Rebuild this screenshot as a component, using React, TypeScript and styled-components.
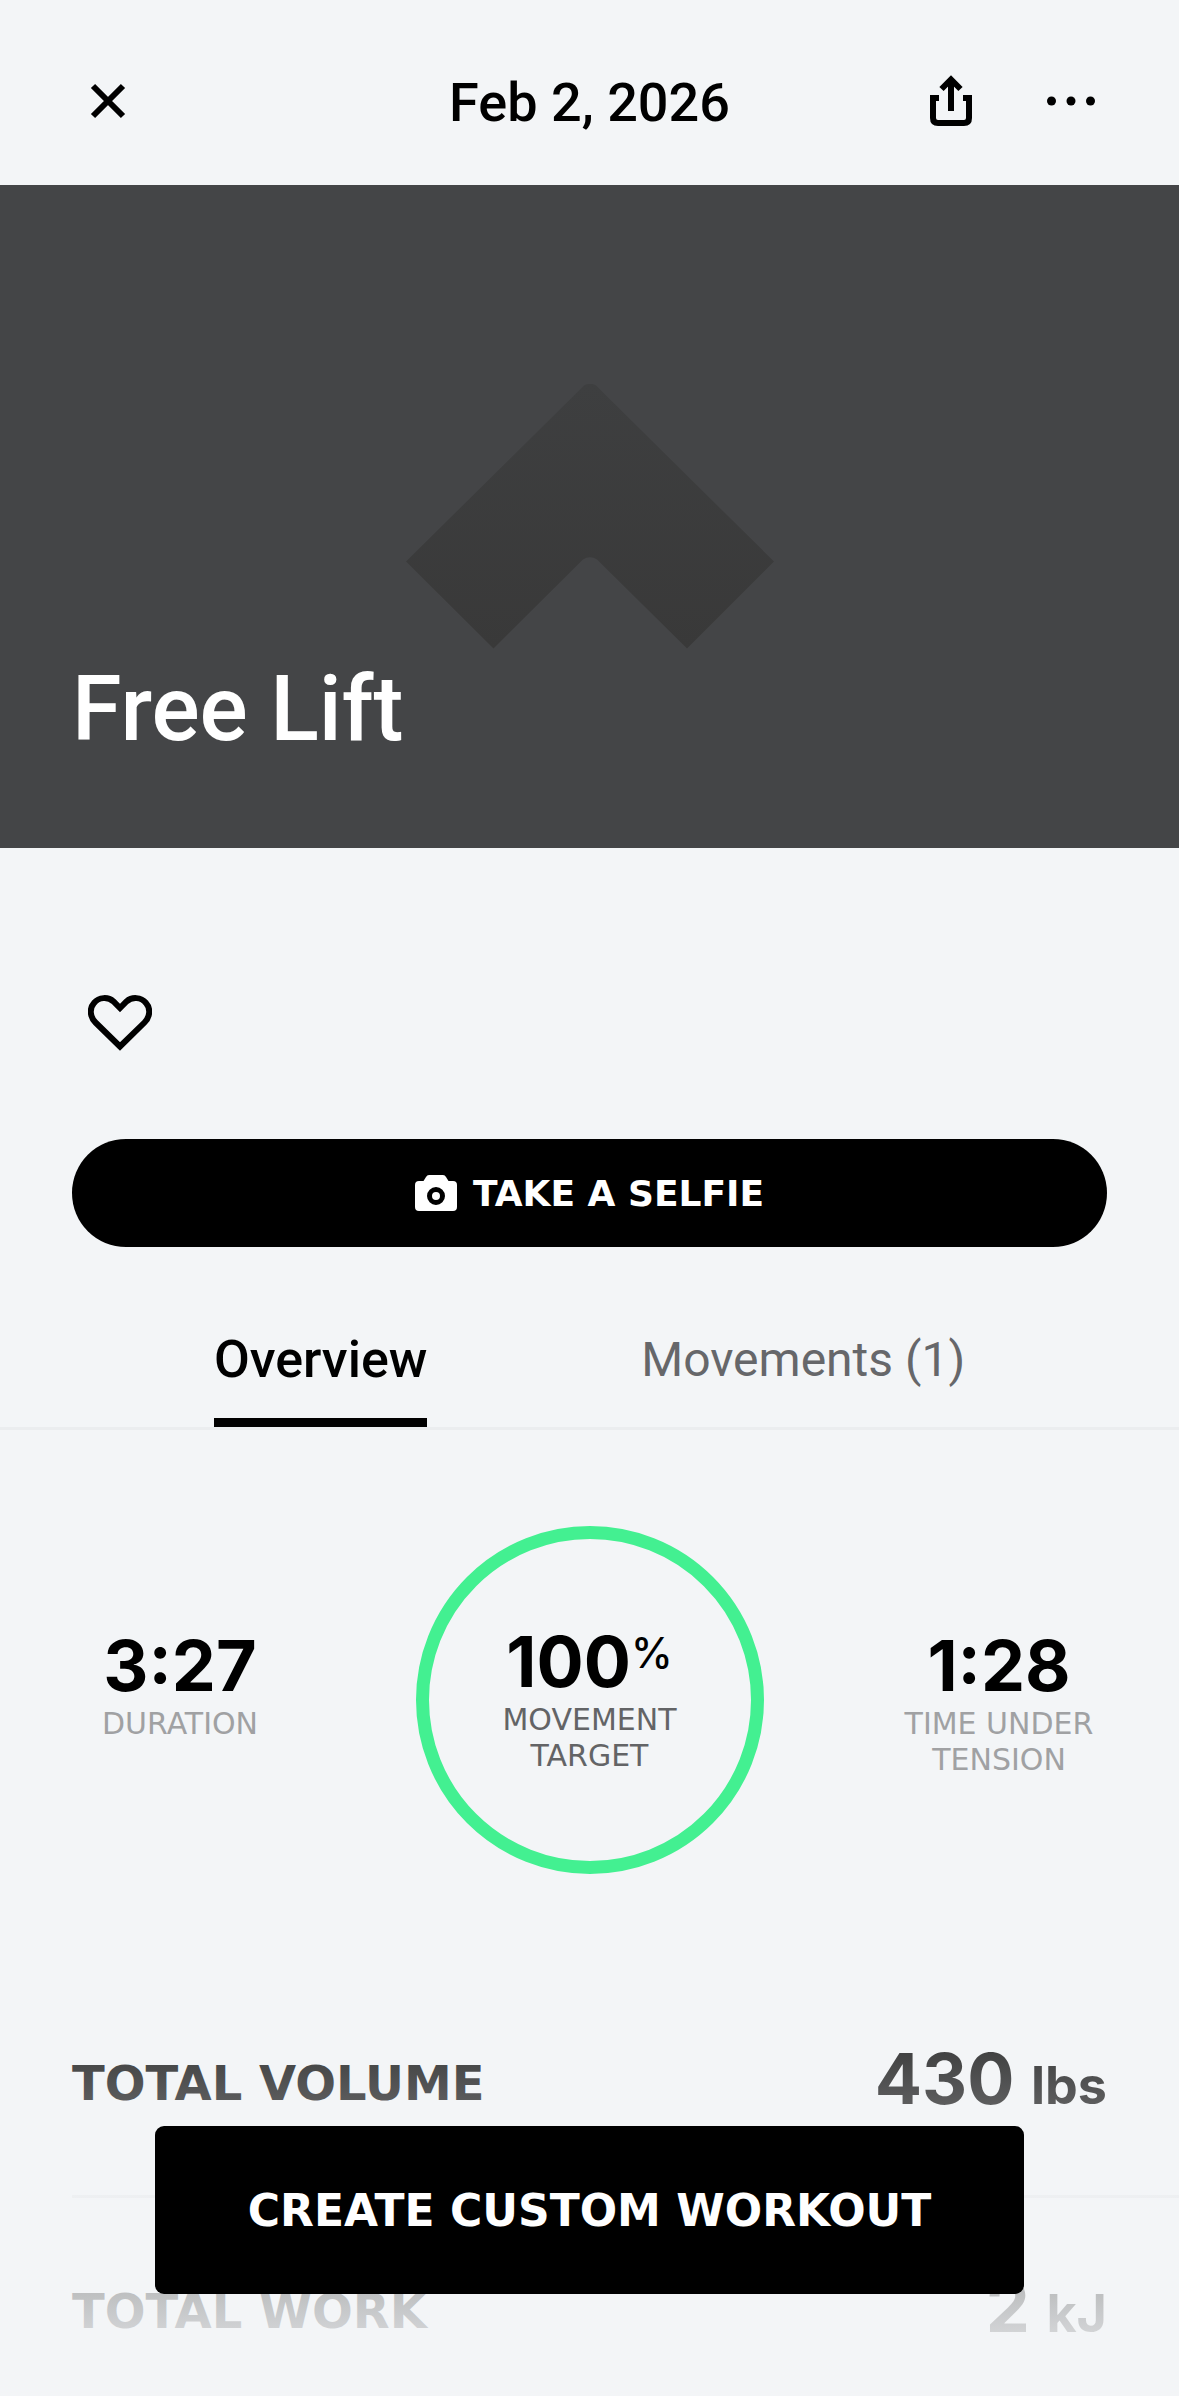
import React, { useState } from "react";
import styled, { createGlobalStyle } from "styled-components";

const sans = `Roboto, "Liberation Sans", sans-serif`;
const numeral = `Inter, "Liberation Sans", sans-serif`;
const wide = `"DejaVu Sans", "Liberation Sans", sans-serif`;
const surface = "#f3f5f7";
const line = "#ebedef";

const GlobalStyle = createGlobalStyle`
  *, *::before, *::after { box-sizing: border-box; }
  body { margin: 0; background: ${surface}; color: #000; font-family: ${sans}; }
  button { margin: 0; padding: 0; border: 0; background: none; color: inherit; font: inherit; cursor: pointer; }
  h1, h2, p, dl, dt, dd { margin: 0; }
  svg { display: block; }
`;

const Shell = styled.div`
  position: relative;
  display: flex;
  flex-direction: column;
  height: 100vh;
  overflow: hidden;
`;

const Header = styled.header`
  display: grid;
  grid-template-columns: 1fr auto 1fr;
  align-items: center;
  flex: none;
  height: 185px;
  padding: 16px 72px 0;
`;

const HeaderTitle = styled.h2`
  padding-top: 4px;
  font-size: 54px;
  line-height: 72px;
  font-weight: 500;
`;

const Actions = styled.div`
  display: flex;
  justify-content: flex-end;
  gap: 48px;
`;

const IconButton = styled.button<{ $size?: number }>`
  display: flex;
  align-items: center;
  justify-content: center;
  width: ${({ $size = 72 }) => $size}px;
  height: ${({ $size = 72 }) => $size}px;
`;

const Scroller = styled.main`
  flex: 1;
  min-height: 0;
  overflow-y: auto;
  scrollbar-width: none;
  padding-bottom: 240px;
`;

const Hero = styled.section`
  position: relative;
  display: flex;
  align-items: flex-end;
  height: 663px;
  padding: 0 72px 84px;
  background: #444547;
`;

const HeroMark = styled.svg`
  position: absolute;
  top: 199px;
  left: 50%;
  margin-left: -185px;
`;

const HeroTitle = styled.h1`
  position: relative;
  color: #fff;
  font-size: 90px;
  line-height: 108px;
  font-weight: 500;
`;

const Intro = styled.section`
  display: flex;
  flex-direction: column;
  align-items: flex-start;
  gap: 68px;
  padding: 127px 72px 72px;
`;

const SelfieButton = styled.button`
  display: flex;
  align-items: center;
  justify-content: center;
  gap: 16px;
  width: 100%;
  height: 108px;
  border-radius: 54px;
  background: #000;
  color: #fff;
  font-family: ${wide};
  font-size: 36px;
  font-weight: 700;
`;

const Tabs = styled.div`
  display: flex;
  justify-content: space-evenly;
  border-bottom: 3px solid ${line};
`;

const Tab = styled.button<{ $active: boolean }>`
  padding: 2px 0 19px;
  border-bottom: 9px solid ${({ $active }) => ($active ? "#000" : "transparent")};
  color: ${({ $active }) => ($active ? "#000" : "#66676a")};
  font-size: ${({ $active }) => ($active ? 52 : 48)}px;
  line-height: 78px;
  font-weight: ${({ $active }) => ($active ? 500 : 400)};
`;

const Stats = styled.section`
  display: grid;
  grid-template-columns: 216px 1fr 216px;
  justify-items: center;
  padding: 96px 72px;
`;

const Stat = styled.div`
  padding-top: 104px;
  text-align: center;
`;

const Ring = styled.div`
  display: flex;
  flex-direction: column;
  align-items: center;
  justify-content: center;
  width: 348px;
  height: 348px;
  border: 13px solid #43f091;
  border-radius: 50%;
  text-align: center;
`;

const StatValue = styled.p`
  display: flex;
  justify-content: center;
  font-family: ${numeral};
  font-size: 70px;
  line-height: 72px;
  font-weight: 700;
`;

const Percent = styled.span`
  font-size: 42px;
  line-height: 54px;
  font-weight: 500;
`;

const StatLabel = styled.p<{ $strong?: boolean }>`
  max-width: 216px;
  margin-top: 4px;
  color: ${({ $strong }) => ($strong ? "#636466" : "#a0a1a3")};
  font-family: ${wide};
  font-size: 30px;
  line-height: 36px;
`;

const Totals = styled.dl`
  padding-left: 72px;
`;

const TotalRow = styled.div`
  display: flex;
  align-items: center;
  justify-content: space-between;
  height: 228px;
  padding-right: 72px;
  border-bottom: 3px solid #e6e8ea;
`;

const TotalLabel = styled.dt`
  font-family: ${wide};
  font-size: 48px;
  line-height: 72px;
  font-weight: 700;
`;

const TotalValue = styled.dd`
  font-family: ${numeral};
  font-size: 70px;
  line-height: 72px;
  font-weight: 700;
`;

const Unit = styled.span`
  font-size: 52px;
`;

const Footer = styled.footer`
  position: absolute;
  inset: auto 0 0;
  display: flex;
  align-items: flex-end;
  height: 470px;
  padding: 0 155px 102px;
  background: linear-gradient(rgba(243, 245, 247, 0), ${surface});
  pointer-events: none;
`;

const CreateButton = styled.button`
  flex: 1;
  height: 168px;
  border-radius: 9px;
  background: #000;
  color: #fff;
  font-family: ${wide};
  font-size: 44px;
  font-weight: 700;
  pointer-events: auto;
`;

const totals = [
  { label: "TOTAL VOLUME", value: "430", unit: "lbs" },
  { label: "TOTAL WORK", value: "2", unit: "kJ" },
];

const tabNames = ["Overview", "Movements (1)"];

function CloseIcon() {
  return (
    <svg width="36" height="36" viewBox="0 0 36 36" fill="none" stroke="#000" strokeWidth="6">
      <path d="M3 3l30 30M33 3L3 33" />
    </svg>
  );
}

function ShareIcon() {
  return (
    <svg width="42" height="52" viewBox="0 0 42 52" fill="none" stroke="#000" strokeWidth="6">
      <path d="M9 23H3v20q0 5 5 5h26q5 0 5-5V23h-6" />
      <path d="M21 36V5M11.500 14L21 4.500 30.500 14" />
    </svg>
  );
}

function MoreIcon() {
  return (
    <svg width="48" height="10" viewBox="0 0 48 10">
      <circle cx="4.500" cy="5" r="4.500" />
      <circle cx="24" cy="5" r="4.500" />
      <circle cx="43.500" cy="5" r="4.500" />
    </svg>
  );
}

function HeartIcon() {
  return (
    <svg width="64" height="56" viewBox="0 0 64 56" fill="none" stroke="#000" strokeWidth="6">
      <path d="M32 51.500L7.500 27.500C1.500 21.500 1.500 13 6 8C11 2 20 1.500 25.500 6.500L32 13L38.500 6.500C44 1.500 53 2 58 8C62.500 13 62.500 21.500 56.500 27.500Z" />
    </svg>
  );
}

function CameraIcon() {
  return (
    <svg width="42" height="36" viewBox="0 0 42 36">
      <path
        fill="#fff"
        d="M14 0h14q2 0 3 2l2.500 4H38q4 0 4 4v22q0 4-4 4H4q-4 0-4-4V10q0-4 4-4h4.500L11 2q1-2 3-2z"
      />
      <circle cx="21" cy="21" r="6.500" fill="#fff" stroke="#000" strokeWidth="5" />
    </svg>
  );
}

export default function App() {
  const [active, setActive] = useState(0);
  return (
    <Shell>
      <GlobalStyle />
      <Header>
        <IconButton type="button" aria-label="Close">
          <CloseIcon />
        </IconButton>
        <HeaderTitle>Feb 2, 2026</HeaderTitle>
        <Actions>
          <IconButton type="button" aria-label="Share">
            <ShareIcon />
          </IconButton>
          <IconButton type="button" aria-label="More">
            <MoreIcon />
          </IconButton>
        </Actions>
      </Header>
      <Scroller>
        <Hero>
          <HeroMark width="370" height="265" viewBox="0 0 370 265" aria-hidden="true">
            <defs>
              <linearGradient id="mark" x1="0" y1="0" x2="0" y2="1">
                <stop offset="0" stopColor="#3e3f40" />
                <stop offset="1" stopColor="#393939" />
              </linearGradient>
            </defs>
            <path
              fill="url(#mark)"
              d="M179 1.500Q185-2 191 1.500L369 177.500 282 264.500 192 175.500Q185 171 178 175.500L88.500 264.500 1 177.500Z"
            />
          </HeroMark>
          <HeroTitle>Free Lift</HeroTitle>
        </Hero>
        <Intro>
          <IconButton type="button" aria-label="Like" $size={96}>
            <HeartIcon />
          </IconButton>
          <SelfieButton type="button">
            <CameraIcon />
            TAKE A SELFIE
          </SelfieButton>
        </Intro>
        <Tabs role="tablist">
          {tabNames.map((name, i) => (
            <Tab
              key={name}
              type="button"
              role="tab"
              aria-selected={i === active}
              $active={i === active}
              onClick={() => setActive(i)}
            >
              {name}
            </Tab>
          ))}
        </Tabs>
        <Stats>
          <Stat>
            <StatValue>3:27</StatValue>
            <StatLabel>DURATION</StatLabel>
          </Stat>
          <Ring>
            <StatValue>
              100<Percent>%</Percent>
            </StatValue>
            <StatLabel $strong>MOVEMENT TARGET</StatLabel>
          </Ring>
          <Stat>
            <StatValue>1:28</StatValue>
            <StatLabel>TIME UNDER TENSION</StatLabel>
          </Stat>
        </Stats>
        <Totals>
          {totals.map(({ label, value, unit }) => (
            <TotalRow key={label}>
              <TotalLabel>{label}</TotalLabel>
              <TotalValue>
                {value} <Unit>{unit}</Unit>
              </TotalValue>
            </TotalRow>
          ))}
        </Totals>
      </Scroller>
      <Footer>
        <CreateButton type="button">CREATE CUSTOM WORKOUT</CreateButton>
      </Footer>
    </Shell>
  );
}
